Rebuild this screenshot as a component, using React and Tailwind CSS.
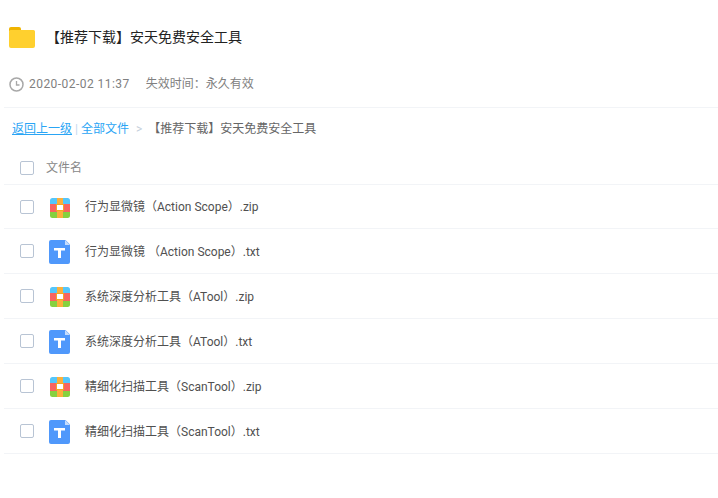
const font = { fontFamily: 'Roboto, "Noto Sans CJK SC", sans-serif' };

function Folder() {
  return (
    <svg width="26" height="21" viewBox="0 0 26 21" className="shrink-0">
      <path d="M0 2a2 2 0 0 1 2-2h8a2 2 0 0 1 2 2v2H0z" fill="#f0b400" />
      <path d="M0 4.500a1.500 1.500 0 0 1 1.500-1.500H24.500a1.500 1.500 0 0 1 1.500 1.500V19a2 2 0 0 1-2 2H2a2 2 0 0 1-2-2z" fill="#ffd02e" />
    </svg>
  );
}

function Clock() {
  return (
    <svg width="15" height="15" viewBox="0 0 15 15" fill="none" stroke="#a8a8a8" className="shrink-0">
      <circle cx="7.500" cy="7.500" r="6.500" strokeWidth="1.500" />
      <path d="M7.500 4v4h3" strokeWidth="1.300" />
    </svg>
  );
}

function Zip() {
  return (
    <svg width="20" height="20" viewBox="0 0 20 20" className="shrink-0">
      <defs><clipPath id="zipc"><rect width="20" height="20" rx="2.500" /></clipPath></defs>
      <g clipPath="url(#zipc)">
        <rect width="20" height="6" fill="#55c6fa" />
        <rect y="6" width="20" height="8" fill="#f9645f" />
        <rect y="14" width="20" height="6" fill="#86d13f" />
        <rect x="7" width="6" height="20" fill="#fbb03b" />
      </g>
      <rect x="6.500" y="6.500" width="7" height="6" fill="#fff" stroke="#f5a623" strokeWidth="1" />
    </svg>
  );
}

function Txt() {
  return (
    <svg width="21" height="24" viewBox="0 0 21 24" className="shrink-0">
      <path d="M2 0h14.500L21 4.500V22a2 2 0 0 1-2 2H2a2 2 0 0 1-2-2V2a2 2 0 0 1 2-2z" fill="#4f98fb" />
      <path d="M16 0l5 5h-5z" fill="#c5dcfb" />
      <path d="M5 8h11v2.500h-4V18H9v-7.500H5z" fill="#fff" />
    </svg>
  );
}

function Check() {
  return <span className="block w-[14px] h-[14px] shrink-0 rounded-[2px] border border-[#b8c4d4] bg-white" />;
}

const rows = [
  ["行为显微镜（Action Scope）.zip", "zip"],
  ["行为显微镜 （Action Scope）.txt", "txt"],
  ["系统深度分析工具（ATool）.zip", "zip"],
  ["系统深度分析工具（ATool）.txt", "txt"],
  ["精细化扫描工具（ScanTool）.zip", "zip"],
  ["精细化扫描工具（ScanTool）.txt", "txt"],
];

export default function App() {
  return (
    <div className="w-[718px] h-[498px] bg-white overflow-hidden" style={font}>
      <div className="h-[73px] flex items-center pl-[9px] pt-[1px]">
        <Folder />
        <h1 className="ml-[11px] text-[14px] leading-[20px] font-normal text-[#222]">【推荐下载】安天免费安全工具</h1>
      </div>
      <div className="h-[34px] ml-[4px] pl-[5px] pb-[12px] flex items-center text-[12px] text-[#808080]">
        <Clock />
        <span className="ml-[5px] tracking-[0.45px]">2020-02-02 11:37</span>
        <span className="ml-[16px]">失效时间：永久有效</span>
      </div>
      <div className="ml-[4px] border-t border-[#f2f4f7] h-[43px] flex items-center pl-[8px] text-[12px]">
        <a className="text-[#2aa5f5] underline">返回上一级</a>
        <span className="mx-[3px] text-[#c5d8ee]">|</span>
        <a className="text-[#2aa5f5]">全部文件</a>
        <span className="ml-[7px] text-[#c5d0dc]">&gt;</span>
        <span className="ml-[6px] text-[#666]">【推荐下载】安天免费安全工具</span>
      </div>
      <div className="ml-[4px] h-[34px] pt-[1px] flex items-center pl-[16px] text-[12px] text-[#888]">
        <Check />
        <span className="ml-[12px]">文件名</span>
      </div>
      <div className="ml-[4px] border-t border-[#f2f4f7]">
        {rows.map(([name, type], i) => (
          <div key={name} className="h-[45px] first:h-[44px] border-b border-[#f2f4f7] flex items-center pl-[16px] text-[12px] text-[#505050]">
            <Check />
            <span className="w-[21px] ml-[15px] pt-[2px] flex justify-center">{type === "zip" ? <Zip /> : <Txt />}</span>
            <span className={i === 0 ? "ml-[15px]" : "ml-[15px] pt-[2px]"}>{name}</span>
          </div>
        ))}
      </div>
    </div>
  );
}
